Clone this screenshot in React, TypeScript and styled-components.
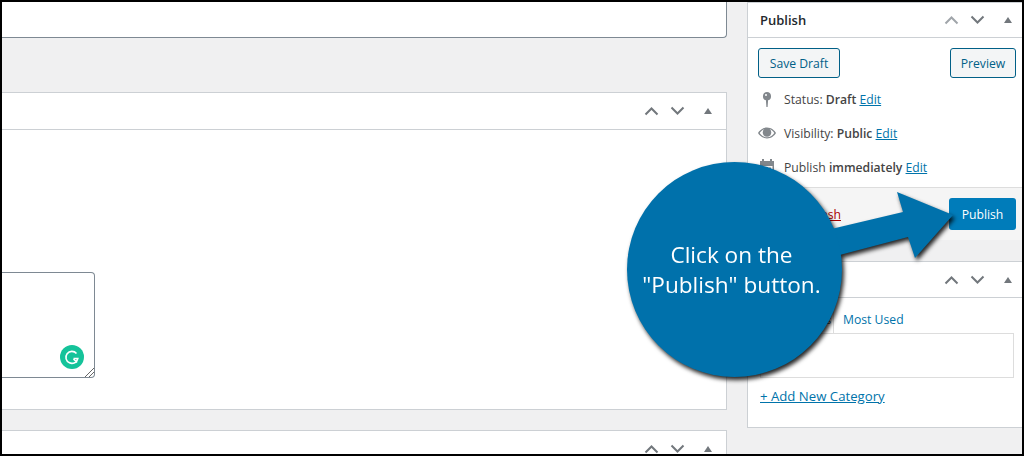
import React from "react"
import styled, { createGlobalStyle } from "styled-components"

const GlobalStyle = createGlobalStyle`
  html, body { margin: 0; padding: 0; overflow: hidden; }
  body { font-family: "Open Sans", "Liberation Sans", sans-serif; }
`

const Frame = styled.div`
  position: relative;
  box-sizing: border-box;
  width: 1024px;
  height: 456px;
  border: 2px solid #000;
  background: #f0f0f1;
  overflow: hidden;
  display: flex;
  gap: 20px;
  font-size: 12.2px;
  color: #444;

  b {
    font-weight: 600;
  }
`

const MainColumn = styled.div`
  width: 725px;
  flex: none;
  display: flex;
  flex-direction: column;
`

const SideColumn = styled.div`
  flex: 1;
  display: flex;
  flex-direction: column;
  gap: 21px;
`

const TitleBox = styled.div`
  flex: none;
  box-sizing: border-box;
  height: 36px;
  background: #fff;
  border: 1px solid #7e8993;
  border-width: 0 1px 1px 0;
  border-bottom-right-radius: 4px;
  margin-bottom: 54px;
`

const Card = styled.section<{ $height: number; $side?: boolean }>`
  flex: none;
  box-sizing: border-box;
  height: ${(p) => p.$height}px;
  background: #fff;
  border: 1px solid #ccd0d4;
  border-width: ${(p) => (p.$side ? "1px 0 1px 1px" : "1px 1px 1px 0")};
  margin-bottom: ${(p) => (p.$side ? 0 : 20)}px;
`

const CardHeader = styled.header<{ $height?: number; $side?: boolean }>`
  box-sizing: border-box;
  height: ${(p) => p.$height ?? 37}px;
  border-bottom: 1px solid #ccd0d4;
  display: flex;
  align-items: center;
  justify-content: space-between;
  padding: 0 ${(p) => (p.$side ? 8 : 12)}px 0 12px;
`

const CardTitle = styled.h2`
  margin: 0;
  font-size: 13px;
  font-weight: 600;
  color: #23282d;
`

const Handles = styled.div`
  display: flex;
  align-items: center;
  gap: 11px;
  margin-left: auto;
`

const Chevron = styled.svg<{ $light?: boolean }>`
  width: 15px;
  height: 10px;
  fill: none;
  stroke: ${(p) => (p.$light ? "#a0a5aa" : "#72777c")};
  stroke-width: 2;
`

const Toggle = styled.span`
  width: 0;
  height: 0;
  margin-left: 8px;
  margin-right: 2px;
  border-left: 4.5px solid transparent;
  border-right: 4.5px solid transparent;
  border-bottom: 6px solid #72777c;
`

const CardBody = styled.div`
  padding-top: 142px;
`

const NoteField = styled.div`
  position: relative;
  box-sizing: border-box;
  width: 93px;
  height: 106px;
  background: #fff;
  border: 1px solid #7e8993;
  border-left: none;
  border-radius: 0 4px 4px 0;
`

const GrammarlyBadge = styled.svg`
  position: absolute;
  right: 10px;
  bottom: 8px;
  width: 24px;
  height: 24px;
`

const ResizeGrip = styled.svg`
  position: absolute;
  right: 0;
  bottom: 0;
  width: 10px;
  height: 10px;
  stroke: #666;
  stroke-width: 1;
`

const PublishBody = styled.div`
  padding: 10px 6px 0 10px;
`

const ButtonRow = styled.div`
  display: flex;
  justify-content: space-between;
  margin-bottom: 4px;
`

const GhostButton = styled.button<{ $width: number }>`
  box-sizing: border-box;
  width: ${(p) => p.$width}px;
  height: 30px;
  padding: 0;
  background: #f3f5f6;
  border: 1px solid #016087;
  border-radius: 3px;
  color: #016087;
  font: inherit;
`

const StatusRow = styled.div`
  display: flex;
  align-items: center;
  height: 34px;
  gap: 6px;
`

const StatusIcon = styled.svg`
  flex: none;
  width: 20px;
  height: 20px;
  fill: #82878c;
`

const Link = styled.a<{ $danger?: boolean }>`
  color: ${(p) => (p.$danger ? "#a00" : "#0073aa")};
  text-decoration: underline;
`

const Actions = styled.div`
  box-sizing: border-box;
  height: 53px;
  margin-top: 3px;
  background: #f5f5f5;
  border-top: 1px solid #ddd;
  display: flex;
  align-items: center;
  justify-content: space-between;
  padding: 0 6px 0 12px;
`

const PublishButton = styled.button`
  box-sizing: border-box;
  width: 67px;
  height: 32px;
  padding: 0;
  background: #007cba;
  border: none;
  border-radius: 3px;
  color: #fff;
  font: inherit;
`

const Tabs = styled.div`
  display: flex;
  height: 35px;
  padding-left: 12px;
  box-sizing: border-box;
  align-items: flex-end;
`

const ActiveTab = styled.div`
  box-sizing: border-box;
  width: 74px;
  height: 28px;
  padding-top: 6px;
  border: 1px solid #ddd;
  border-bottom: none;
  color: #444;
  font-size: 10.8px;
  text-align: center;
  white-space: nowrap;
`

const Tab = styled.div`
  box-sizing: border-box;
  height: 28px;
  padding: 6px 10px 0 9px;
  color: #0073aa;
  white-space: nowrap;
`

const TabPanel = styled.div`
  box-sizing: border-box;
  height: 45px;
  margin: 0 8px 0 12px;
  border: 1px solid #ddd;
`

const AddLink = styled(Link)`
  display: block;
  margin: 9px 0 0 12px;
  font-size: 13.2px;
`

const Callout = styled.div`
  position: absolute;
  left: 625px;
  top: 158px;
  width: 330px;
  height: 220px;
  filter: drop-shadow(2px 3px 2px rgba(0, 0, 0, 0.85));
`

const CalloutArrow = styled.svg`
  position: absolute;
  left: 0;
  top: 0;
  width: 330px;
  height: 220px;
`

const CalloutBubble = styled.div`
  position: absolute;
  box-sizing: border-box;
  left: 0;
  top: 2px;
  width: 215px;
  height: 215px;
  padding: 0 6px 0 0;
  border-radius: 50%;
  background: #0071ab;
  color: #fff;
  display: flex;
  align-items: center;
  justify-content: center;
  text-align: center;
  font-size: 22.6px;
  line-height: 30px;
  white-space: nowrap;
`

const Chevrons = ({ light }: { light?: boolean }) => (
  <Handles>
    <Chevron $light={light} viewBox="0 0 15 10">
      <path d="M1.5 8.5 7.5 2.5 13.5 8.5" />
    </Chevron>
    <Chevron viewBox="0 0 15 10">
      <path d="M1.5 1.5 7.5 7.5 13.5 1.5" />
    </Chevron>
    <Toggle />
  </Handles>
)

export default function App() {
  return (
    <>
      <GlobalStyle />
      <Frame>
        <MainColumn>
          <TitleBox />
          <Card $height={318}>
            <CardHeader>
              <Chevrons />
            </CardHeader>
            <CardBody>
              <NoteField>
                <GrammarlyBadge viewBox="0 0 24 24">
                  <circle cx="12" cy="12" r="12" fill="#15c39a" />
                  <path
                    d="M16.500 8.500A6 6 0 1 0 17.800 13.500H13.500M17 17.500l-3.500-3.500"
                    fill="none"
                    stroke="#fff"
                    strokeWidth="1.6"
                  />
                </GrammarlyBadge>
                <ResizeGrip viewBox="0 0 10 10">
                  <path d="M1 10 10 1M5 10 10 5" />
                </ResizeGrip>
              </NoteField>
            </CardBody>
          </Card>
          <Card $height={60}>
            <CardHeader>
              <Chevrons />
            </CardHeader>
          </Card>
        </MainColumn>
        <SideColumn>
          <Card $side $height={238}>
            <CardHeader $side $height={35}>
              <CardTitle>Publish</CardTitle>
              <Chevrons light />
            </CardHeader>
            <PublishBody>
              <ButtonRow>
                <GhostButton $width={82}>Save Draft</GhostButton>
                <GhostButton $width={66}>Preview</GhostButton>
              </ButtonRow>
              <StatusRow>
                <StatusIcon viewBox="0 0 20 20">
                  <path
                    fillRule="evenodd"
                    d="M9 3a4.200 4.200 0 0 1 1.100 8.200L9.600 18H8.400L7.900 11.200A4.200 4.200 0 0 1 9 3zM8 5a1 1 0 1 0 0 2 1 1 0 0 0 0-2z"
                  />
                </StatusIcon>
                <span>
                  Status: <b>Draft</b> <Link>Edit</Link>
                </span>
              </StatusRow>
              <StatusRow>
                <StatusIcon viewBox="0 0 20 20">
                  <path
                    fillRule="evenodd"
                    d="M9 4.500c4.300 0 7.600 3 9 5.500-1.400 2.500-4.700 5.500-9 5.500S1.400 12.500 0 10c1.400-2.500 4.700-5.500 9-5.500zM1.700 10c1.300 2 3.900 4.300 7.300 4.300s6-2.300 7.300-4.300c-1-1.500-2.600-3-4.700-3.900a4.300 4.300 0 1 1-5.200 0C4.300 7 2.700 8.500 1.700 10z"
                  />
                </StatusIcon>
                <span>
                  Visibility: <b>Public</b> <Link>Edit</Link>
                </span>
              </StatusRow>
              <StatusRow>
                <StatusIcon viewBox="0 0 20 20">
                  <path
                    fillRule="evenodd"
                    d="M2 4h2V2h2v2h6V2h2v2h2v15H2V4zm1.500 5v8.500h11V9h-11zM5 10.500h2v2H5zM8 10.500h2v2H8zM11 10.500h2v2h-2zM5 13.800h2v2H5zM8 13.800h2v2H8z"
                  />
                </StatusIcon>
                <span>
                  Publish <b>immediately</b> <Link>Edit</Link>
                </span>
              </StatusRow>
            </PublishBody>
            <Actions>
              <Link $danger>Move to Trash</Link>
              <PublishButton>Publish</PublishButton>
            </Actions>
          </Card>
          <Card $side $height={167}>
            <CardHeader $side $height={36}>
              <CardTitle>Categories</CardTitle>
              <Chevrons />
            </CardHeader>
            <Tabs>
              <ActiveTab>All Categories</ActiveTab>
              <Tab>Most Used</Tab>
            </Tabs>
            <TabPanel />
            <AddLink>+ Add New Category</AddLink>
          </Card>
        </SideColumn>
        <Callout>
          <CalloutArrow viewBox="0 0 330 220">
            <path d="M200 70 276 52 270 32 326 55 288 98 281 77 205 97Z" fill="#0071ab" />
          </CalloutArrow>
          <CalloutBubble>
            Click on the
            <br />
            "Publish" button.
          </CalloutBubble>
        </Callout>
      </Frame>
    </>
  )
}
